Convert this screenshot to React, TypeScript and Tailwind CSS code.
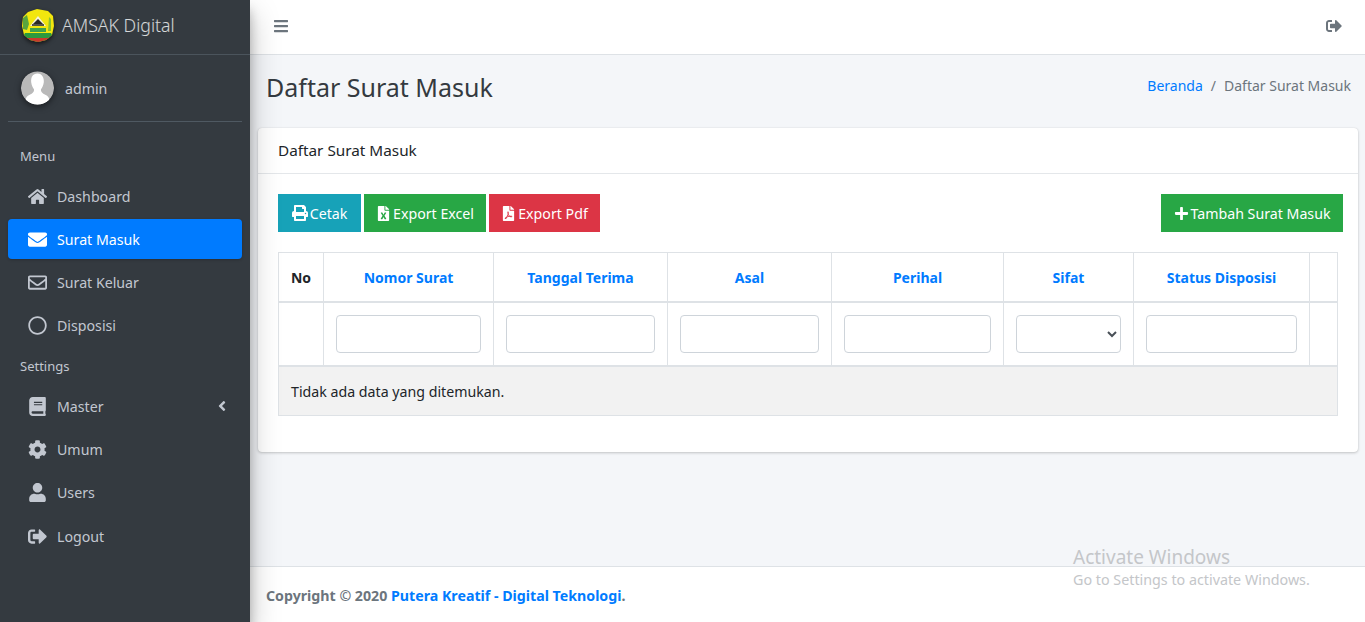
import { FaHome, FaEnvelope, FaRegEnvelope, FaRegCircle, FaBook, FaCog, FaUser, FaSignOutAlt, FaAngleLeft, FaBars, FaPrint, FaFileExcel, FaFilePdf, FaPlus } from "react-icons/fa"

const Logo = () => (
  <svg viewBox="0 0 32 33" className="w-[32px] h-[33px] drop-shadow-[0_2px_2px_rgba(0,0,0,0.6)]">
    <path d="M6 3 L15 0 L26 2 L31 7 L32 17 L30 26 L24 31 L16 33 L8 31 L2 26 L0 17 L1 8 Z" fill="#f2e60e" />
    <path d="M2 26 L3 24 L29 24 L30 26 L24 31 L16 33 L8 31 Z" fill="#2c9a3e" />
    <path d="M5 29 L27 29 L24 31 L16 33 L8 31 Z" fill="#c93a2c" />
    <path d="M16 7 L24 17 L8 17 Z" fill="#f4f1d8" />
    <path d="M16 10 L21 15 L11 15 Z" fill="#2a2a24" />
    <path d="M10 15 H22 V17 H10 Z" fill="#55534a" />
    <path d="M1 9 L5 6 L7 15 L5 21 L1 20 Z" fill="#5aa53e" />
    <path d="M8 19 H24 V23 H8 Z" fill="#3fa14a" />
    <path d="M27 8 L29 10 L29 22 L26 22 Z" fill="#8cbf2f" />
  </svg>
)

const Avatar = () => (
  <svg viewBox="0 0 34 34" className="w-[33px] h-[34px] rounded-full drop-shadow-[0_2px_3px_rgba(0,0,0,0.5)]">
    <circle cx="17" cy="17" r="17" fill="#b9b9b9" />
    <path d="M17 2 C12 2 10 6 10.500 11 C11 15 12.500 17 13.500 18.500 C13.500 21 12 22.500 9 24 C6 25.500 5 27 5 29 C8 32 12 34 17 34 C22 34 26 32 29 29 C29 27 28 25.500 25 24 C22 22.500 20.500 21 20.500 18.500 C21.500 17 23 15 23.500 11 C24 7 22 2 17 2 Z" fill="#fff" />
  </svg>
)

const NavItem = ({ icon, label, active, arrow, className }: { icon: React.ReactNode; label: string; active?: boolean; arrow?: boolean; className?: string }) => (
  <a className={`mx-2 mb-[3px] h-10 flex items-center rounded pl-4 pr-3 text-[14.200px] ${active ? "bg-[#007bff] text-white shadow-[0_1px_3px_rgba(0,0,0,0.2)]" : "text-[#c2c7d0]"} ${className ?? ""}`}>
    <span className="w-[26px] mr-[7px] flex justify-center text-[19px]">{icon}</span>
    <span className="flex-1 pt-[1px]">{label}</span>
    {arrow && <FaAngleLeft className="text-[16px]" />}
  </a>
)

const Sidebar = () => (
  <aside className="w-[250px] shrink-0 bg-[#343a40] z-10 flex flex-col shadow-[0_14px_28px_rgba(0,0,0,0.25),0_10px_10px_rgba(0,0,0,0.22)]">
    {/* Brand */}
    <div className="h-[55px] flex items-center border-b border-[#4b545c] pl-[22px] pb-[4px]">
      <Logo />
      <span className="ml-[8px] pt-[1px] text-[17.700px] font-light text-white/80">AMSAK Digital</span>
    </div>
    {/* User */}
    <div className="mx-2 h-[67px] flex items-center border-b border-[#4f5962] pl-[13px] mb-[24px]">
      <Avatar />
      <span className="ml-[11px] pt-[1px] text-[14.200px] text-[#c2c7d0]">admin</span>
    </div>
    <div className="pl-[20px] text-[#c2c7d0] text-[13px] leading-[20px] mb-[10px]">Menu</div>
    <NavItem icon={<FaHome />} label="Dashboard" />
    <NavItem icon={<FaEnvelope />} label="Surat Masuk" active />
    <NavItem icon={<FaRegEnvelope />} label="Surat Keluar" />
    <NavItem icon={<FaRegCircle />} label="Disposisi" />
    <div className="pl-[20px] text-[#c2c7d0] text-[13px] leading-[20px] mb-[10px] mt-[8px]">Settings</div>
    <NavItem icon={<FaBook />} label="Master" arrow />
    <NavItem icon={<FaCog />} label="Umum" />
    <NavItem icon={<FaUser />} label="Users" />
    <NavItem icon={<FaSignOutAlt />} label="Logout" className="mt-[1px]" />
  </aside>
)

const Btn = ({ icon, label, className }: { icon: React.ReactNode; label: string; className: string }) => (
  <button className={`h-[38px] flex items-center justify-center gap-[2px] text-white text-[14.200px] ${className}`}>
    {icon}
    <span className="pt-[1px]">{label}</span>
  </button>
)

const widths = [45, 170, 174, 164, 172, 130, 176, 28]
const headers = ["Nomor Surat", "Tanggal Terima", "Asal", "Perihal", "Sifat", "Status Disposisi"]
const inputCls = "block w-full h-[38px] rounded border border-[#ced4da] bg-white text-[#495057]"

const App = () => {
  return (
    <div className="h-[622px] w-[1365px] flex overflow-hidden bg-[#f4f6f9] text-[#212529] text-[14.200px] relative" style={{ fontFamily: "'Noto Sans', sans-serif" }}>
      <Sidebar />
      <div className="flex-1 flex flex-col min-w-0">
        {/* Navbar */}
        <nav className="h-[55px] shrink-0 bg-white border-b border-[#dee2e6] flex items-center justify-between pl-[24px] pr-[24px] text-[#6c757d]">
          <FaBars className="text-[16px] w-[14px] -mt-[2px]" />
          <FaSignOutAlt className="text-[16px] -mt-[2px] translate-x-[1px]" />
        </nav>

        {/* Page heading */}
        <div className="h-[73px] shrink-0 flex items-center justify-between pl-[16px] pr-[14px] pb-[7px]">
          <h1 className="text-[25px] text-[#343a40]">Daftar Surat Masuk</h1>
          <div className="flex gap-2 text-[14px] pb-[6px]">
            <a className="text-[#007bff]">Beranda</a>
            <span className="text-[#6c757d]">/</span>
            <span className="text-[#6c757d]">Daftar Surat Masuk</span>
          </div>
        </div>

        {/* Card */}
        <div className="ml-2 mr-[7px] h-[324px] shrink-0 bg-white rounded shadow-[0_0_1px_rgba(0,0,0,0.125),0_1px_3px_rgba(0,0,0,0.2)]">
          <div className="h-[46px] border-b border-[#e4e7ea] flex items-center pl-[20px] text-[15.300px] text-[#212529]">Daftar Surat Masuk</div>
          <div className="pl-[20px] pr-[15px] pt-[20px]">
            <div className="flex gap-[3px]">
              <Btn icon={<FaPrint className="text-[16px]" />} label="Cetak" className="w-[83px] bg-[#17a2b8]" />
              <Btn icon={<FaFileExcel className="text-[15px]" />} label="Export Excel" className="w-[122px] bg-[#28a745]" />
              <Btn icon={<FaFilePdf className="text-[15px]" />} label="Export Pdf" className="w-[111px] bg-[#dc3545]" />
              <Btn icon={<FaPlus className="text-[15px]" />} label="Tambah Surat Masuk" className="w-[182px] ml-auto bg-[#28a745]" />
            </div>
            <table className="mt-[20px] w-[1059px] table-fixed border-collapse">
              <colgroup>
                {widths.map((w, i) => <col key={i} style={{ width: w }} />)}
              </colgroup>
              <thead>
                <tr className="h-[49px]">
                  <th className="border border-[#dee2e6] border-b-2 pt-[1px] text-[14px] font-bold">No</th>
                  {headers.map(h => (
                    <th key={h} className="border border-[#dee2e6] border-b-2 pt-[1px] text-[14px] font-bold text-[#007bff]">{h}</th>
                  ))}
                  <th className="border border-[#dee2e6] border-b-2"></th>
                </tr>
                <tr className="h-[64px]">
                  <th className="border border-[#dee2e6] border-b-2"></th>
                  {headers.map(h => (
                    <th key={h} className="border border-[#dee2e6] border-b-2 px-3 font-normal">
                      {h === "Sifat"
                        ? <select className={`${inputCls} px-2`}><option></option></select>
                        : <input className={inputCls} />}
                    </th>
                  ))}
                  <th className="border border-[#dee2e6] border-b-2"></th>
                </tr>
              </thead>
              <tbody>
                <tr className="h-[50px] bg-[#f2f2f2]">
                  <td colSpan={8} className="border border-[#dee2e6] px-3 pt-[1px] text-[14.200px]">Tidak ada data yang ditemukan.</td>
                </tr>
              </tbody>
            </table>
          </div>
        </div>

        {/* Footer */}
        <footer className="mt-auto h-[56px] shrink-0 bg-white border-t border-[#dee2e6] flex items-center pl-[16px] pt-[2px] text-[14.200px] font-bold text-[#6c757d]">
          Copyright © 2020&nbsp;<a className="text-[#007bff]">Putera Kreatif - Digital Teknologi</a>.
        </footer>
      </div>

      {/* Activate Windows watermark */}
      <div className="absolute left-[1073px] top-[546px] z-20 text-[#c4c6c9]">
        <div className="text-[19px] leading-[23px]">Activate Windows</div>
        <div className="text-[14.300px] leading-[20px] mt-[1px]">Go to Settings to activate Windows.</div>
      </div>
    </div>
  )
}

export default App
